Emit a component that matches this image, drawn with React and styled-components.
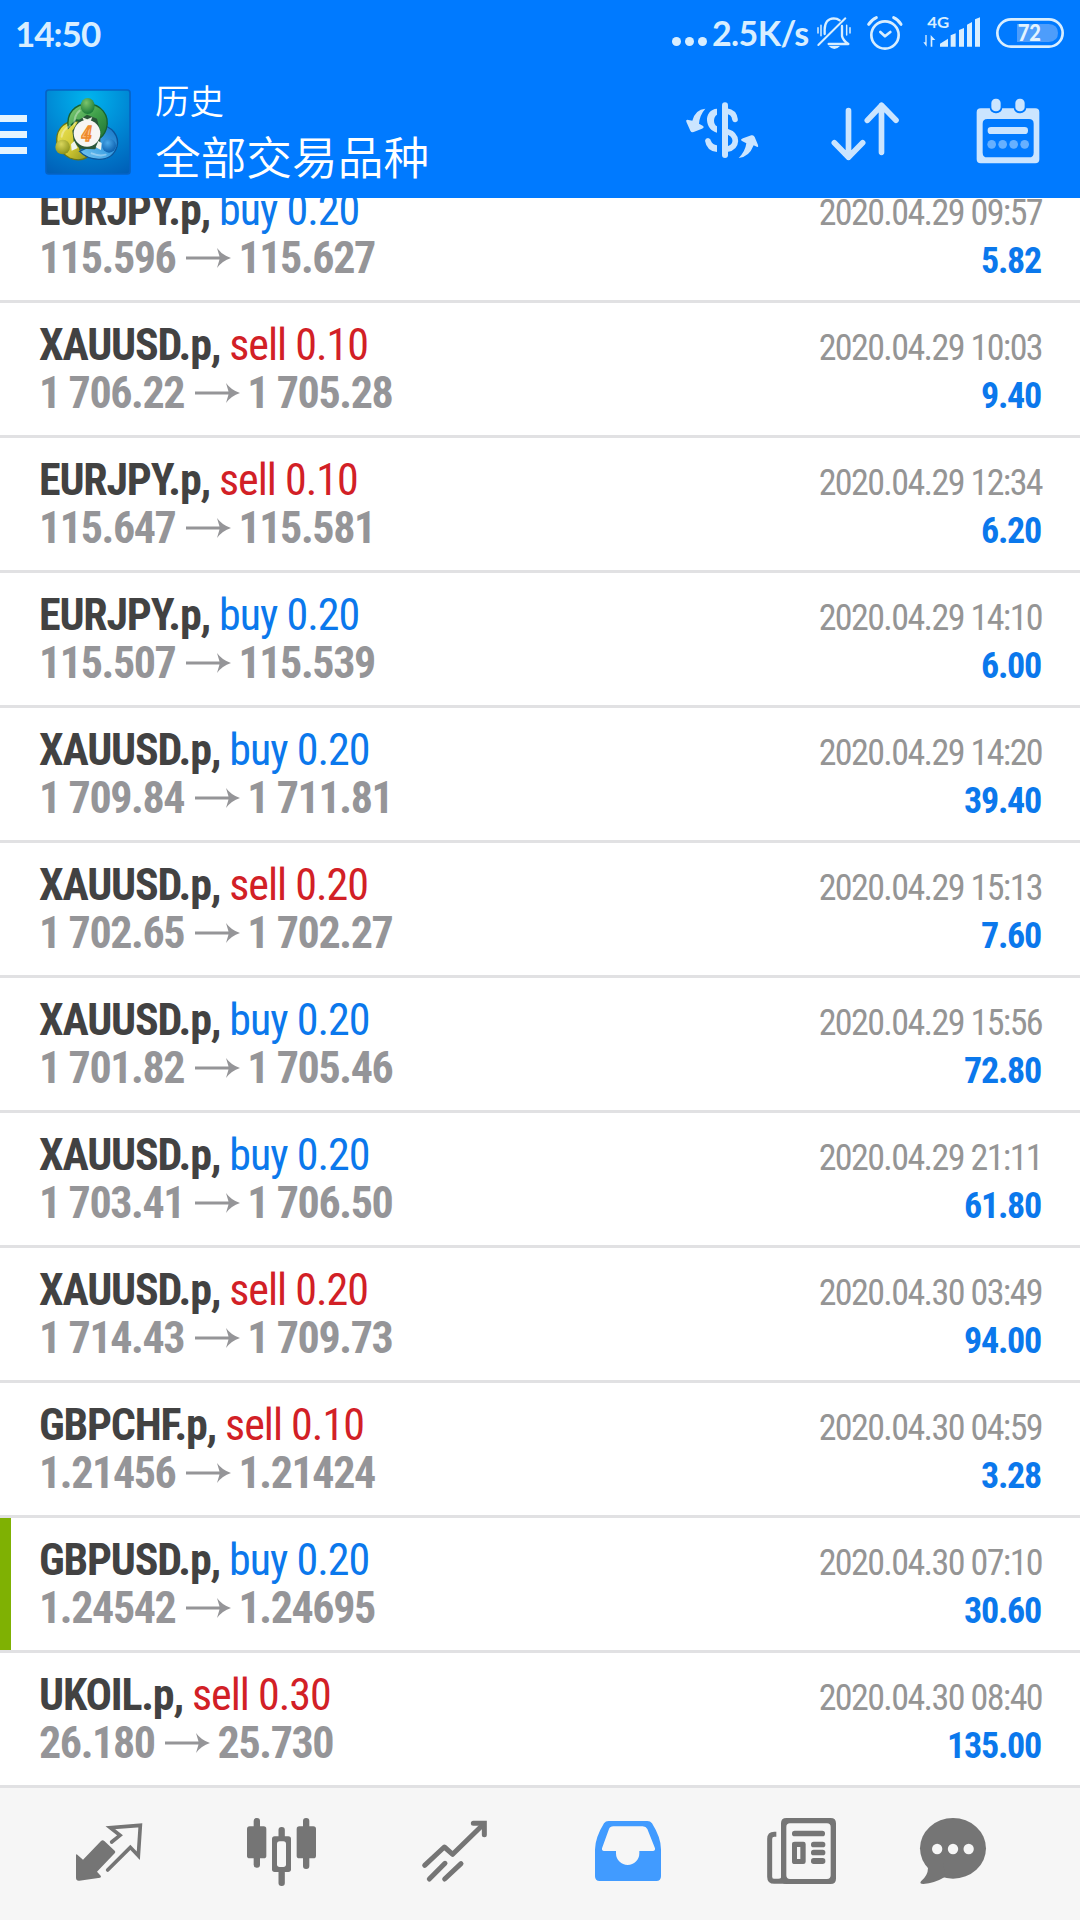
import React from 'react';
import styled, { createGlobalStyle } from 'styled-components';

const deals = [
  { symbol: 'EURJPY.p', type: 'buy', lots: '0.20', open: '115.596', close: '115.627', time: '2020.04.29 09:57', profit: '5.82' },
  { symbol: 'XAUUSD.p', type: 'sell', lots: '0.10', open: '1 706.22', close: '1 705.28', time: '2020.04.29 10:03', profit: '9.40' },
  { symbol: 'EURJPY.p', type: 'sell', lots: '0.10', open: '115.647', close: '115.581', time: '2020.04.29 12:34', profit: '6.20' },
  { symbol: 'EURJPY.p', type: 'buy', lots: '0.20', open: '115.507', close: '115.539', time: '2020.04.29 14:10', profit: '6.00' },
  { symbol: 'XAUUSD.p', type: 'buy', lots: '0.20', open: '1 709.84', close: '1 711.81', time: '2020.04.29 14:20', profit: '39.40' },
  { symbol: 'XAUUSD.p', type: 'sell', lots: '0.20', open: '1 702.65', close: '1 702.27', time: '2020.04.29 15:13', profit: '7.60' },
  { symbol: 'XAUUSD.p', type: 'buy', lots: '0.20', open: '1 701.82', close: '1 705.46', time: '2020.04.29 15:56', profit: '72.80' },
  { symbol: 'XAUUSD.p', type: 'buy', lots: '0.20', open: '1 703.41', close: '1 706.50', time: '2020.04.29 21:11', profit: '61.80' },
  { symbol: 'XAUUSD.p', type: 'sell', lots: '0.20', open: '1 714.43', close: '1 709.73', time: '2020.04.30 03:49', profit: '94.00' },
  { symbol: 'GBPCHF.p', type: 'sell', lots: '0.10', open: '1.21456', close: '1.21424', time: '2020.04.30 04:59', profit: '3.28' },
  { symbol: 'GBPUSD.p', type: 'buy', lots: '0.20', open: '1.24542', close: '1.24695', time: '2020.04.30 07:10', profit: '30.60', marked: true },
  { symbol: 'UKOIL.p', type: 'sell', lots: '0.30', open: '26.180', close: '25.730', time: '2020.04.30 08:40', profit: '135.00' },
];

const MutedBell = () => (
  <svg width="37" height="38" viewBox="528 42 111 114" fill="none" stroke="#d8eeff" strokeWidth="7" strokeLinecap="round">
    <path d="M554 102 V88 Q555 56 581 55 Q592 55 599 61" />
    <path d="M606 78 V108 Q608 120 625 132 H566" strokeLinejoin="round" />
    <path d="M535 135 L616 55" strokeWidth="6" />
    <path d="M566 138 H600 Q583 156 566 138Z" fill="#d8eeff" stroke="none" />
    <path d="M534 83 V99 M543 76 V107 M620 76 V105 M630 83 V99" strokeWidth="4.5" />
  </svg>
);

const Alarm = () => (
  <svg width="40" height="38" viewBox="675 42 120 114" fill="none" stroke="#d8eeff" strokeWidth="8" strokeLinecap="round">
    <circle cx="735" cy="105" r="41" />
    <path d="M686 73 Q695 59 709 53 M761 53 Q775 59 783 73" strokeWidth="9" />
    <path d="M721 96 L735 109 L751 96" strokeLinejoin="round" />
  </svg>
);

const Signal = () => (
  <svg width="60" height="38" viewBox="846 42 180 114" fill="#d8eeff">
    <text x="862" y="84" fontSize="47" fontWeight="700" textLength="66" lengthAdjust="spacingAndGlyphs">4G</text>
    <path d="M860 105 V140 L850 127 H856 V105Z M872 140 V105 L886 120 H877 V140Z" />
    <path d="M900 140 V131 L924 116 V140Z M932 140 V106 L947 100 V140Z M957 140 V90 L972 84 V140Z M981 140 V74 L996 66 V140Z M1005 140 V58 L1020 52 V140Z" />
  </svg>
);

const Battery = () => (
  <svg width="70" height="38" viewBox="1065 42 210 114">
    <rect x="1072" y="58" width="196" height="82" rx="41" fill="none" stroke="#d8eeff" strokeWidth="8" />
    <path d="M1131 72 H1226 Q1254 74 1254 99 Q1254 124 1226 126 H1131Z" fill="#4d9dfb" />
    <text x="1133" y="124" fontSize="69" fontWeight="900" fill="#e2f3ff" textLength="70" lengthAdjust="spacingAndGlyphs">72</text>
  </svg>
);

const AppLogo = () => (
  <svg width="86" height="86" viewBox="46 41 258 258">
    <defs>
      <radialGradient id="tile" cx="0.5" cy="0.1" r="1">
        <stop offset="0" stopColor="#00b4ee" />
        <stop offset="0.55" stopColor="#0084d2" />
        <stop offset="1" stopColor="#005fb8" />
      </radialGradient>
      <linearGradient id="greenBody" x1="0" y1="0" x2="1" y2="1">
        <stop offset="0" stopColor="#8bd07c" />
        <stop offset="0.5" stopColor="#3fa04a" />
        <stop offset="1" stopColor="#1d7034" />
      </linearGradient>
      <linearGradient id="yellowBody" x1="0" y1="0" x2="1" y2="1">
        <stop offset="0" stopColor="#efe85a" />
        <stop offset="0.6" stopColor="#cfc531" />
        <stop offset="1" stopColor="#8f9620" />
      </linearGradient>
      <linearGradient id="blueBody" x1="1" y1="0" x2="0" y2="1">
        <stop offset="0" stopColor="#1672c2" />
        <stop offset="0.5" stopColor="#3b9fe2" />
        <stop offset="1" stopColor="#7cc9f3" />
      </linearGradient>
      <radialGradient id="greenHead" cx="0.4" cy="0.3" r="0.7">
        <stop offset="0" stopColor="#7cc46c" />
        <stop offset="1" stopColor="#1c7c38" />
      </radialGradient>
      <radialGradient id="yellowHead" cx="0.4" cy="0.3" r="0.7">
        <stop offset="0" stopColor="#d9d65c" />
        <stop offset="1" stopColor="#8d931b" />
      </radialGradient>
      <radialGradient id="blueHead" cx="0.4" cy="0.3" r="0.7">
        <stop offset="0" stopColor="#4ba9ea" />
        <stop offset="1" stopColor="#0b5fae" />
      </radialGradient>
    </defs>
    <rect x="49" y="44" width="252" height="252" rx="8" fill="url(#tile)" stroke="#0663c4" strokeWidth="5" />
    <path d="M82 206 C76 168 98 138 138 137 L166 150 L150 222 L172 246 Q150 260 120 248 Q98 238 82 206Z" fill="url(#yellowBody)" stroke="#66741c" strokeWidth="4" />
    <path d="M150 228 L206 200 L210 150 C246 150 270 182 262 214 Q250 252 208 252 Q170 250 150 228Z" fill="url(#blueBody)" stroke="#0b549a" strokeWidth="4" />
    <path d="M116 158 C108 112 138 86 174 86 C212 86 242 118 230 160 Q222 184 204 192 L196 140 L140 134Z" fill="url(#greenBody)" stroke="#17622f" strokeWidth="4" />
    <path d="M134 148 Q134 118 150 106 M96 184 Q100 160 122 152 M186 234 Q210 244 228 238" fill="none" stroke="#ffffff" strokeOpacity="0.35" strokeWidth="6" strokeLinecap="round" />
    <path d="M148 134 L172 118 L202 130 L212 170 L212 204 L196 222 L150 220 L132 198 L128 166Z" fill="#2a5538" />
    <path d="M158 126 L173 132 L188 125 L182 140 H164Z" fill="#dfeedd" />
    <path d="M124 207 L134 197 L144 218 L126 226Z M216 203 L206 197 L198 216 L214 224Z" fill="#eef3ee" />
    <ellipse cx="174" cy="92" rx="21" ry="24" fill="url(#greenHead)" />
    <circle cx="99" cy="215" r="22" fill="url(#yellowHead)" />
    <circle cx="238" cy="211" r="21" fill="url(#blueHead)" />
    <circle cx="172" cy="174" r="40" fill="#f7f5f3" />
    <text x="171" y="196" textAnchor="middle" fontSize="62" fontWeight="700" fontStyle="italic" fill="#fbc68d" stroke="#ee8a2c" strokeWidth="4">4</text>
  </svg>
);

const CurrencyIcon = () => (
  <svg width="78" height="72" viewBox="72 48 234 216" fill="#cbe5ff">
    <rect x="186" y="67" width="18" height="167" rx="9" />
    <path d="M171 86 C151 87 140 104 141 121 C142 140 155 155 171 158 V139 C159 133 159 111 171 104Z" />
    <path d="M135 182 Q136 175 144 174 Q152 175 153 183 Q158 194 171 196 V216 Q140 213 135 182Z" />
    <path d="M200 93 Q222 96 225 118 M200 154 Q226 162 226 183 Q225 203 200 208" fill="none" stroke="#cbe5ff" strokeWidth="17" strokeLinecap="round" />
    <path d="M136 86 Q106 88 97 122 L82 119 Q77 119 79 125 L91 152 Q94 158 101 156 L126 146 Q135 142 128 137 L117 131 Q119 105 136 86Z" />
    <path d="M236 234 Q267 232 281 196 L292 201 Q296 202 294 195 L284 171 Q281 164 274 166 L249 175 Q239 179 246 183 L259 190 Q256 214 236 234Z" />
  </svg>
);

const SortIcon = () => (
  <svg width="72" height="72" viewBox="507 48 216 216" fill="none" stroke="#cbe5ff" strokeWidth="17" strokeLinecap="round" strokeLinejoin="round">
    <path d="M565.5 92 V232 M523 188 L565.5 232 L608 188" />
    <path d="M664.5 217 V76 M622 121 L664.5 76 L708 121" />
  </svg>
);

const CalendarIcon = () => (
  <svg width="68" height="72" viewBox="942 48 204 216" fill="#cbe5ff">
    <path fillRule="evenodd" d="M962 85 H1126 Q1138 85 1138 97 V238 Q1138 250 1126 250 H962 Q950 250 950 238 V97 Q950 85 962 85Z M982 117 Q968 117 968 131 V218 Q968 232 982 232 H1107 Q1121 232 1121 218 V131 Q1121 117 1107 117Z" />
    <rect x="989" y="52" width="38" height="48" rx="18" fill="#007aff" />
    <rect x="1061" y="52" width="38" height="48" rx="18" fill="#007aff" />
    <rect x="994" y="56" width="28" height="38" rx="13" />
    <rect x="1066" y="56" width="28" height="38" rx="13" />
    <rect x="983" y="141" width="121" height="21" rx="10" />
    <g fill="#66b0ff">
      <circle cx="995" cy="193" r="13" />
      <circle cx="1028" cy="193" r="13" />
      <circle cx="1061" cy="193" r="13" />
      <circle cx="1094" cy="193" r="13" />
    </g>
  </svg>
);

const Arrow = () => (
  <svg width="45" height="20" viewBox="0 0 45 20" fill="#959598">
    <path d="M0 8.5 H33.5 L31 0 Q36 7 45 10 Q36 13 31 20 L33.5 11.5 H0Z" />
  </svg>
);

const QuotesIcon = () => (
  <svg width="73" height="73" viewBox="99 108 219 219" fill="#757575">
    <path d="M108 225 Q108 221 112 224 L129 239 L183 183 Q188 178 193 183 L224 212 Q228 216 224 220 L171 275 L182 287 Q185 292 180 293 L118 302 Q108 303 108 293Z" />
    <path d="M215 186 L240 166 L211 143 L301 136 L295 227 L271 202 L203 270" fill="none" stroke="#757575" strokeWidth="11" strokeLinecap="round" />
  </svg>
);

const ChartIcon = () => (
  <svg width="73" height="73" viewBox="618 108 219 219" fill="#757575">
    <rect x="641" y="114" width="19" height="149" rx="9" />
    <rect x="621" y="139" width="58" height="96" rx="8" />
    <rect x="789" y="114" width="19" height="153" rx="9" />
    <rect x="770" y="139" width="58" height="96" rx="8" />
    <rect x="715.5" y="141" width="19" height="177" rx="9" />
    <rect x="696" y="169" width="57" height="107" rx="8" />
    <rect x="711" y="184" width="27" height="77" rx="8" fill="#f6f6f6" />
  </svg>
);

const TradeIcon = () => (
  <svg width="73" height="73" viewBox="1137 108 219 219" fill="none" stroke="#757575" strokeWidth="15" strokeLinecap="round" strokeLinejoin="round">
    <path d="M1154 256 L1213 201 L1238 223 L1328 135" />
    <path d="M1300 130 H1333 V164" strokeLinejoin="miter" />
    <path d="M1168 297 L1215 250 M1214 297 L1263 251" />
  </svg>
);

const HistoryIcon = () => (
  <svg width="73" height="73" viewBox="96 108 219 219" fill="#419bff">
    <path fillRule="evenodd" d="M146 123 H262 Q271 123 276 130 Q303 173 303 208 V289 Q303 303 289 303 H119 Q105 303 105 289 V208 Q106 172 132 130 Q137 123 146 123Z M160 139 Q150 139 147 147 L126 205 Q125 213 132 213 H168 V220 A35 35 0 0 0 238 220 V213 H279 Q286 213 285 205 L262 147 Q258 139 248 139Z" />
  </svg>
);

const NewsIcon = () => (
  <svg width="73" height="73" viewBox="615 108 219 219" fill="#757575">
    <path fillRule="evenodd" d="M679 114 H812 Q828 114 828 130 V296 Q828 312 812 312 H679 Q663 312 663 296 V130 Q663 114 679 114Z M690 130 Q679 130 679 141 V286 Q679 297 690 297 H801 Q812 297 812 286 V141 Q812 130 801 130Z" />
    <path d="M649 163 H643 Q629 163 629 177 V290 Q629 304 643 304 H680" fill="none" stroke="#757575" strokeWidth="15" />
    <path d="M655 297 Q664 297 664 288 V300 H655Z" />
    <rect x="696" y="152" width="99" height="17" rx="8" />
    <rect x="753" y="185" width="43" height="17" rx="8" />
    <rect x="753" y="209" width="43" height="17" rx="8" />
    <rect x="753" y="234" width="43" height="18" rx="8" />
    <path fillRule="evenodd" d="M704 185 H730 Q737 185 737 192 V245 Q737 252 730 252 H704 Q696 252 696 245 V192 Q696 185 704 185Z M711 201 V237 H721 V201Z" />
  </svg>
);

const ChatIcon = () => (
  <svg width="73" height="73" viewBox="1071 108 219 219" fill="#757575">
    <ellipse cx="1179" cy="205" rx="99" ry="91" />
    <path d="M1098 250 L1104 264 Q1104 286 1083 304 Q1077 312 1090 312 Q1124 309 1156 290 L1150 250Z" />
    <circle cx="1131.5" cy="207" r="15.5" fill="#f6f6f6" />
    <circle cx="1179" cy="207" r="15.5" fill="#f6f6f6" />
    <circle cx="1226" cy="207" r="15.5" fill="#f6f6f6" />
  </svg>
);

const App = () => {
  return (
    <Screen>
      <GlobalStyle />
      <Header>
        <StatusBar>
          <Clock>14:50</Clock>
          <StatusIcons>
            <Dots><i /><i /><i /></Dots>
            <Speed>2.5K/s</Speed>
            <MutedBell />
            <Alarm />
            <Signal />
            <Battery />
          </StatusIcons>
        </StatusBar>
        <Toolbar>
          <MenuButton><i /><i /><i /></MenuButton>
          <AppLogo />
          <Titles>
            <h1>历史</h1>
            <p>全部交易品种</p>
          </Titles>
          <Actions>
            <CurrencyIcon />
            <SortIcon />
            <CalendarIcon />
          </Actions>
        </Toolbar>
      </Header>
      <DealList>
        {deals.map((deal) => (
          <Deal key={deal.time} $marked={deal.marked}>
            <DealInfo>
              <DealTitle>
                <b>{deal.symbol}, </b>
                <Volume $type={deal.type}>{deal.type} {deal.lots}</Volume>
              </DealTitle>
              <Prices>
                <span>{deal.open}</span>
                <Arrow />
                <span>{deal.close}</span>
              </Prices>
            </DealInfo>
            <DealResult>
              <Time>{deal.time}</Time>
              <Profit>{deal.profit}</Profit>
            </DealResult>
          </Deal>
        ))}
      </DealList>
      <BottomNav>
        <QuotesIcon />
        <ChartIcon />
        <TradeIcon />
        <HistoryIcon />
        <NewsIcon />
        <ChatIcon />
      </BottomNav>
    </Screen>
  )
}

export default App;

const GlobalStyle = createGlobalStyle`
  * {
    box-sizing: border-box;
  }

  body {
    margin: 0;
    background-color: #fff;
  }

  svg {
    display: block;
    flex-shrink: 0;
  }
`;

const Screen = styled.div`
  display: flex;
  flex-direction: column;
  width: 1080px;
  height: 1920px;
  overflow: hidden;
  font-family: "Roboto Condensed", Roboto, "Noto Sans CJK SC", sans-serif;
  font-stretch: 75%;
`;

const Header = styled.header`
  flex: none;
  height: 198px;
  background-color: #007aff;
  color: #fff;
`;

const StatusBar = styled.div`
  display: flex;
  justify-content: space-between;
  height: 66px;
  padding: 14px 15px 0 15px;
  font-family: Lato, sans-serif;
  font-stretch: normal;
  color: #d8eeff;
`;

const Clock = styled.span`
  margin-top: -1px;
  font-size: 35px;
  font-weight: 700;
  letter-spacing: -1px;
  line-height: 40px;
`;

const StatusIcons = styled.div`
  display: flex;
  align-items: flex-start;

  svg + svg {
    margin-left: 12px;
  }

  svg:nth-of-type(3) {
    margin-left: 17px;
  }

  svg:last-child {
    margin-left: 13px;
  }
`;

const Dots = styled.span`
  display: flex;
  gap: 4px;
  margin: 23px 5px 0 0;

  i {
    width: 9px;
    height: 9px;
    border-radius: 50%;
    background-color: #d8eeff;
  }
`;

const Speed = styled.span`
  width: 104px;
  margin-top: -1px;
  font-size: 34px;
  font-weight: 700;
  letter-spacing: -0.6px;
  line-height: 40px;
  white-space: nowrap;
`;

const Toolbar = styled.div`
  display: flex;
  align-items: center;
  height: 132px;
`;

const MenuButton = styled.div`
  display: flex;
  flex-direction: column;
  gap: 9px;
  width: 27px;
  margin: 4px 18px 0 0;

  i {
    height: 7px;
    background-color: #e4f4ff;
  }
`;

const Titles = styled.div`
  margin: -2px 0 0 24px;
  font-family: "Noto Sans CJK SC", sans-serif;
  font-weight: 350;

  h1 {
    margin: 0;
    font-size: 34.5px;
    font-weight: 350;
    line-height: 48px;
  }

  p {
    margin: 0;
    font-size: 45.7px;
    line-height: 64px;
  }
`;

const Actions = styled.div`
  display: flex;
  margin-left: auto;
  padding-right: 38px;

  svg:nth-child(2) {
    margin: 0 73px 0 67px;
  }
`;

const DealList = styled.div`
  display: flex;
  flex-direction: column;
  justify-content: flex-end;
  height: 1590px;
  overflow: hidden;
`;

const Deal = styled.div`
  display: flex;
  flex: none;
  justify-content: space-between;
  height: 135px;
  padding: 18px 38px 0 39px;
  border-bottom: 3px solid #e1e1e3;
  box-shadow: ${({ $marked }) => ($marked ? 'inset 11px 0 0 #7fb103' : 'none')};
`;

const DealInfo = styled.div`
  font-size: 44px;
  line-height: 48px;
  white-space: pre;
`;

const DealTitle = styled.div`
  height: 48px;
  letter-spacing: -1.2px;
  color: #424242;
`;

const Volume = styled.span`
  font-kerning: none;
  letter-spacing: -1px;
  color: ${({ $type }) => ($type === 'buy' ? '#0b78ec' : '#d22026')};
`;

const Prices = styled.div`
  display: flex;
  align-items: center;
  gap: 10.5px;
  height: 48px;
  font-weight: 700;
  letter-spacing: -1.4px;
  color: #959598;

  svg {
    margin-right: -3px;
  }
`;

const DealResult = styled.div`
  display: flex;
  flex-direction: column;
  align-items: flex-end;
  padding-top: 3px;
  font-size: 36px;
  line-height: 48px;
`;

const Time = styled.span`
  letter-spacing: -1.6px;
  color: #959595;
`;

const Profit = styled.span`
  padding-right: 1px;
  font-weight: 700;
  letter-spacing: -1.25px;
  color: #0b78ec;
`;

const BottomNav = styled.nav`
  display: grid;
  grid-template-columns: repeat(5, 173px) 131px;
  justify-items: center;
  align-content: start;
  flex: none;
  height: 132px;
  padding: 28px 0 0 23px;
  background-color: #f6f6f6;
`;
